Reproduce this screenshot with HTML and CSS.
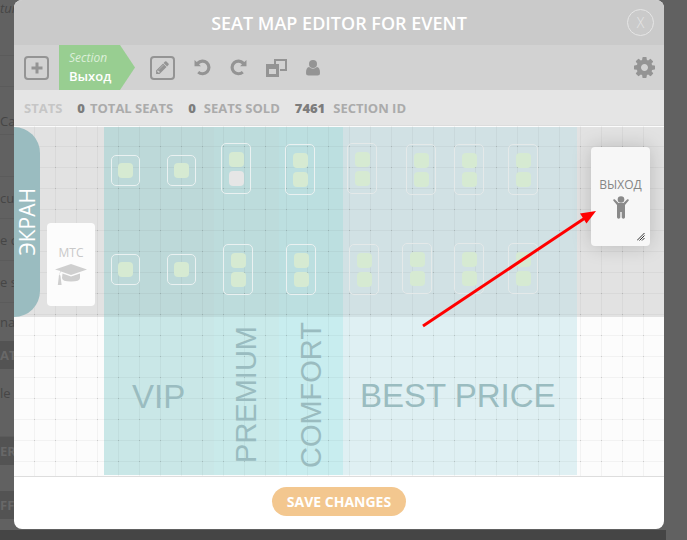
FILE: index.html
```html
<!DOCTYPE html>
<html lang="en">
<head>
<meta charset="utf-8">
<title>Seat map editor</title>
<link rel="stylesheet" href="styles.css">
</head>
<body>
<div class="backdrop" aria-hidden="true">
  <div class="form-strip">
    <p class="form-row tall-row"><em>ture</em></p>
    <p class="form-row short-row"></p>
    <p class="form-row label-row">Cap</p>
    <p class="form-row"></p>
    <p class="form-row">cu</p>
    <p class="form-row">e c</p>
    <p class="form-row">e s</p>
    <p class="form-row last-row">nar</p>
    <h3 class="form-heading">AT</h3>
    <p class="form-row block-row">le</p>
    <h3 class="form-heading">ER</h3>
    <p class="form-gap"></p>
    <h3 class="form-heading">FF</h3>
  </div>
  <div class="page-foot"></div>
</div>

<main class="modal">
  <header class="titlebar">
    <h1>SEAT MAP EDITOR FOR EVENT</h1>
    <button class="close" type="button" aria-label="Close">X</button>
  </header>

  <nav class="toolbar">
    <button class="tool boxed" type="button" aria-label="Add">
      <svg viewBox="0 0 12 12" width="12" height="12"><path d="M4.500 .5h3v4h4v3h-4v4h-3v-4h-4v-3h4z"/></svg>
    </button>
    <a class="crumb" href="#"><em>Section</em><strong>Выход</strong></a>
    <button class="tool boxed edit" type="button" aria-label="Edit">
      <svg viewBox="0 0 1792 1792" width="15" height="15"><path d="M491 1536l91-91-235-235-91 91v107h128v128h107zM1014 608q0-22-22-22-10 0-17 7l-542 542q-7 7-7 17 0 22 22 22 10 0 17-7l542-542q7-7 7-17zM960 416l416 416-832 832H128v-416zM1643 512q0 53-37 90l-166 166-416-416 166-165q36-38 90-38 53 0 91 38l235 234q37 39 37 91z"/></svg>
    </button>
    <button class="tool undo" type="button" aria-label="Undo">
      <svg viewBox="0 0 16 16" width="17" height="17"><path d="M0.500 1l2 1.800A7.500 7.500 0 1 1 3 13.500l1.900-2.300A4.500 4.500 0 1 0 4.700 4.900L6.500 6.800H.5z"/></svg>
    </button>
    <button class="tool redo" type="button" aria-label="Redo">
      <svg viewBox="0 0 16 16" width="17" height="17"><path d="M15.500 1l-2 1.800A7.500 7.500 0 1 0 13 13.500l-1.900-2.300A4.500 4.500 0 1 1 11.300 4.900L9.500 6.800h6z"/></svg>
    </button>
    <button class="tool windows" type="button" aria-label="Duplicate">
      <svg viewBox="0 0 21 18" width="21" height="18"><path fill-rule="evenodd" d="M8 0h13v12h-7v-2h5V2h-9v3H8zM0 5h13v13H0zm3 5v5h7v-5z"/></svg>
    </button>
    <button class="tool user" type="button" aria-label="User">
      <svg viewBox="0 0 14 16" width="14" height="16"><circle cx="7" cy="4" r="4"/><path d="M3 7q4 3.500 8 0 3 .5 3 6 0 2.500-2.500 2.500h-9Q0 15.500 0 13q0-5.500 3-6z"/></svg>
    </button>
    <button class="tool settings" type="button" aria-label="Settings">
      <svg viewBox="128 128 1536 1536" width="21" height="21"><path d="M1152 896q0-106-75-181t-181-75-181 75-75 181 75 181 181 75 181-75 75-181zm512-109v222q0 12-8 23t-20 13l-185 28q-19 54-39 91 35 50 107 138 10 12 10 25t-9 23q-27 37-99 108t-94 71q-12 0-26-9l-138-108q-44 23-91 38-16 136-29 186-7 28-36 28h-222q-14 0-24.500-8.500t-11.500-21.500l-28-184q-49-16-90-37l-141 107q-10 9-25 9-14 0-25-11-126-114-165-168-7-10-7-23 0-12 8-23 15-21 51-66.500t54-70.500q-27-50-41-99l-183-27q-13-2-21-12.500t-8-23.500v-222q0-12 8-23t19-13l186-28q14-46 39-92-40-57-107-138-10-12-10-24 0-10 9-23 26-36 98.500-107.500t94.500-71.500q13 0 26 10l138 107q44-23 91-38 16-136 29-186 7-28 36-28h222q14 0 24.500 8.500t11.500 21.500l28 184q49 16 90 37l142-107q9-9 24-9 13 0 25 10 129 119 165 170 7 8 7 22 0 12-8 23-15 21-51 66.500t-54 70.500q26 50 41 98l183 28q13 2 21 12.500t8 23.500z"/></svg>
    </button>
  </nav>

  <section class="stats">
    <span class="stats-title">STATS</span>
    <span class="stat tight"><b>0</b> TOTAL SEATS</span>
    <span class="stat"><b>0</b> SEATS SOLD</span>
    <span class="stat"><b>7461</b> SECTION ID</span>
  </section>

  <section class="canvas">
    <div class="floor"></div>
    <div class="zone vip"></div>
    <div class="zone premium"></div>
    <div class="zone comfort"></div>
    <div class="zone best"></div>
    <div class="shade"></div>
    <div class="grid"></div>

    <div class="table single a1"><i></i></div>
    <div class="table single a2"><i></i></div>
    <div class="table a3"><i></i><i class="off"></i></div>
    <div class="table a4"><i></i><i></i></div>
    <div class="table pale a5"><i></i><i></i></div>
    <div class="table pale a6"><i></i><i></i></div>
    <div class="table pale a7"><i></i><i></i></div>
    <div class="table pale a8"><i></i><i></i></div>
    <div class="table single b1"><i></i></div>
    <div class="table single b2"><i></i></div>
    <div class="table b3"><i></i><i></i></div>
    <div class="table b4"><i></i><i></i></div>
    <div class="table pale b5"><i></i><i></i></div>
    <div class="table pale b6"><i></i><i></i></div>
    <div class="table pale b7"><i></i><i></i></div>
    <div class="table pale b8"><i></i><i></i></div>

    <div class="screen"><span>ЭКРАН</span></div>
    <span class="label vip-label">VIP</span>
    <span class="label side premium-label">PREMIUM</span>
    <span class="label side comfort-label">COMFORT</span>
    <span class="label best-label">BEST PRICE</span>

    <div class="object mtc">
      <span>МТС</span>
      <svg viewBox="0 0 32 22" width="32" height="22"><path d="M16 0l16 5.500L16 11 6 7.600q-1 1-1.200 3.400 1 .7.800 2l1 8H2.800l1-8q-.4-1.300.7-2.300.1-2.200 1-3.600L0 5.500zM7.500 9.500L16 12.500l9-3V14q0 3.500-9 3.500T7 14z"/></svg>
    </div>
    <div class="object exit">
      <span>ВЫХОД</span>
      <svg viewBox="0 0 16 23" width="16" height="23"><circle cx="8" cy="3.500" r="3.300"/><path d="M1.700 3.300L5.500 7h5l3.800-3.700q1.300-.6 1.600.9L12 9v12.500q-1.600 2.500-3.300 0V16H7.300v5.500Q5.600 24 4 21.500V9L.1 4.200q.3-1.500 1.600-.9z"/></svg>
      <svg class="grip" viewBox="0 0 8 8" width="8" height="8"><path d="M0 7.500L7.500 0M2.500 7.500l5-5M5 7.500L7.500 5"/></svg>
    </div>

    <svg class="arrow" viewBox="0 0 174 117" width="174" height="117"><path class="shaft" d="M1 115L163 7"/><path d="M174 0l-9.500 12.500-6.500-10z"/></svg>
  </section>

  <footer class="actions">
    <button class="save" type="button">SAVE CHANGES</button>
  </footer>
</main>
</body>
</html>
```
FILE: styles.css
```css
* { box-sizing: border-box; }

body {
  margin: 0;
  min-height: 100vh;
  background: #616161;
  font-family: "Open Sans", "Noto Sans", sans-serif;
  overflow: hidden;
}

h1, h3, p { margin: 0; }

button {
  padding: 0;
  border: 0;
  background: none;
  font-family: inherit;
  cursor: pointer;
}

/* Page behind the dialog */
.backdrop {
  position: absolute;
  inset: 0;
  overflow: hidden;
}

.form-strip {
  width: 30px;
  font-size: 13px;
  color: #464646;
}

.form-row {
  display: flex;
  align-items: center;
  height: 42px;
  border-bottom: 1px solid #5b5b5b;
  white-space: nowrap;
}

.tall-row { height: 56px; padding-bottom: 40px; }
.short-row { height: 31px; }
.label-row { height: 48px; padding-top: 20px; }
.last-row { border: 0; height: 38px; }
.block-row { height: 68px; padding-bottom: 20px; }
.form-gap { height: 26px; }

.form-heading {
  display: flex;
  align-items: center;
  height: 28px;
  background: #535353;
  color: #686868;
  font-size: 13px;
}

.page-foot {
  position: absolute;
  left: 0;
  right: 21px;
  top: 530px;
  bottom: 0;
  background: #454545;
}

/* Dialog */
.modal {
  position: relative;
  margin: 0 23px 0 14px;
  border-radius: 8px;
  background: #fff;
  overflow: hidden;
}

.titlebar {
  display: grid;
  grid-template-columns: 37px 1fr 37px;
  align-items: center;
  height: 45px;
  background: #cacaca;
}

.titlebar h1 {
  grid-column: 2;
  color: #fff;
  font-size: 18px;
  font-weight: 600;
  line-height: 24px;
  text-align: center;
}

.close {
  width: 27px;
  height: 27px;
  border: 1px solid #e6e6e6;
  border-radius: 50%;
  color: #e6e6e6;
  font-size: 14px;
  font-weight: 300;
}

.toolbar {
  display: flex;
  align-items: center;
  height: 45px;
  padding: 0 9px 0 10px;
  background: #d2d2d2;
}

.tool {
  display: flex;
  align-items: center;
  justify-content: center;
}

.tool svg { fill: #949494; }

.boxed {
  width: 25px;
  height: 24px;
  border: 2px solid #949494;
  border-radius: 4px;
}

.crumb {
  display: flex;
  flex-direction: column;
  justify-content: center;
  width: 76px;
  height: 45px;
  margin: 0 15px 0 10px;
  padding: 0 0 1px 10px;
  background: #98ce91;
  clip-path: polygon(0 0, 61px 0, 100% 50%, 61px 100%, 0 100%);
  color: #fff;
  font-size: 13px;
  line-height: 18px;
  text-decoration: none;
}

.crumb em { color: #dcefd9; font-size: 12px; }
.crumb strong { font-weight: 600; }

.undo { margin-left: 19px; }
.redo { margin-left: 19px; }
.windows { margin-left: 19px; }
.user { margin-left: 19px; }
.settings { margin-left: auto; }

.stats {
  display: flex;
  align-items: center;
  gap: 15px;
  height: 36px;
  background: #e5e5e5;
  border-bottom: 1px solid #dcdcdc;
  padding: 0 10px;
  color: #ababab;
  font-size: 13px;
  font-weight: 700;
}

.stats-title { color: #c6c6c6; }
.stat { display: flex; gap: 8px; }
.tight { gap: 5px; }
.stat b { color: #7d7d7d; }

/* Seat map */
.canvas {
  position: relative;
  height: 350px;
  background: #fcfcfc;
  overflow: hidden;
}

.floor, .zone, .shade, .grid, .table, .label, .screen, .object, .arrow { position: absolute; }

.floor, .shade {
  inset: 1px 0 auto;
  height: 190px;
}

.floor { background: #f1f1f1; }
.shade { background: rgba(0, 0, 0, 0.06); }

.zone { top: 1px; bottom: 1px; }
.vip { left: 90px; width: 110px; background: #c9e7e7; }
.premium { left: 200px; width: 65px; background: #c9eaea; }
.comfort { left: 265px; width: 64px; background: #c8edef; }
.best { left: 329px; width: 234px; background: #dff0f3; }

.grid {
  inset: 0;
  background:
    linear-gradient(90deg, transparent 20px, rgba(0, 0, 0, 0.04) 20px) 0 0 / 21px 21px,
    linear-gradient(transparent 20px, rgba(0, 0, 0, 0.04) 20px) 0 0 / 21px 21px,
    conic-gradient(from 90deg at 20px 20px, rgba(0, 0, 0, 0.12) 90deg, transparent 0) 0 0 / 21px 21px;
}

.table {
  display: flex;
  flex-direction: column;
  align-items: center;
  justify-content: center;
  gap: 4px;
  width: 30px;
  height: 51px;
  border: 1px solid #eaf1f1;
  border-radius: 5px;
}

.single { width: 29px; height: 31px; }
.pale { border-color: #e4e9e9; }

.table i {
  width: 15px;
  height: 15px;
  border-radius: 4px;
  background: #d6ead2;
}

.table .off { background: #e6e6e6; }

.a1 { left: 97px; top: 29px; }
.a2 { left: 153px; top: 29px; }
.a3 { left: 207px; top: 17px; }
.a4 { left: 271px; top: 18px; }
.a5 { left: 333px; top: 17px; }
.a6 { left: 392px; top: 18px; }
.a7 { left: 440px; top: 18px; }
.a8 { left: 494px; top: 18px; }
.b1 { left: 97px; top: 128px; }
.b2 { left: 153px; top: 128px; }
.b3 { left: 209px; top: 118px; }
.b4 { left: 272px; top: 118px; }
.b5 { left: 335px; top: 118px; }
.b6 { left: 388px; top: 117px; }
.b7 { left: 440px; top: 117px; }
.b8 { left: 494px; top: 117px; }

.screen {
  display: flex;
  align-items: center;
  justify-content: center;
  left: 0;
  top: 1px;
  width: 26px;
  height: 190px;
  border-radius: 0 26px 26px 0;
  background: #9abcc0;
  color: #fff;
  font-size: 21px;
  line-height: 26px;
}

.screen span, .side {
  writing-mode: vertical-rl;
  transform: rotate(180deg);
}

.label {
  color: #9abcc0;
  font-family: "Liberation Sans", Arial, sans-serif;
  font-size: 33px;
  line-height: 40px;
  white-space: nowrap;
}

.side { font-size: 29px; }

.vip-label { left: 118px; top: 251px; }
.best-label { left: 346px; top: 250px; }
.premium-label { left: 212px; top: 200px; }
.comfort-label { left: 277px; top: 196px; }

.object {
  display: flex;
  flex-direction: column;
  align-items: center;
  justify-content: center;
  gap: 2px;
  border-radius: 4px;
  font-size: 12px;
  line-height: 18px;
}

.mtc {
  left: 33px;
  top: 97px;
  width: 48px;
  height: 83px;
  background: #fcfcfc;
  color: #c9c9c9;
  fill: #cfcfcf;
}

.exit {
  left: 577px;
  top: 21px;
  width: 59px;
  height: 99px;
  padding-top: 2px;
  background: #f7f7f7;
  box-shadow: 0 0 20px rgba(0, 0, 0, 0.18);
  color: #858585;
  fill: #8a8a8a;
}

.grip {
  position: absolute;
  right: 5px;
  bottom: 5px;
  fill: none;
  stroke: #333;
}

.arrow {
  left: 408px;
  top: 85px;
  fill: #f00;
}

.shaft { stroke: #f00; stroke-width: 3; }

.actions {
  display: flex;
  justify-content: center;
  padding: 10px 0 13px;
  border-top: 1px solid #ddd;
}

.save {
  height: 29px;
  padding: 0 15px;
  border-radius: 15px;
  background: #f3c78f;
  color: #fff;
  font-size: 14px;
  font-weight: 700;
}
```
